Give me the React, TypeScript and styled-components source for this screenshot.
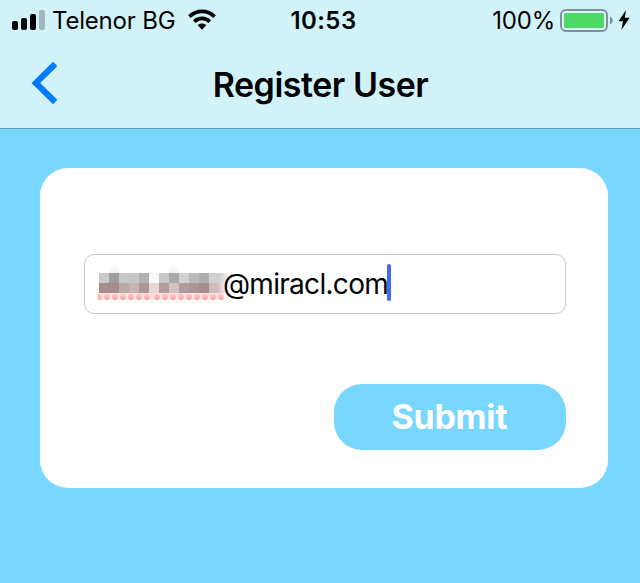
import React from 'react';
import styled, { createGlobalStyle } from 'styled-components';

const GlobalStyle = createGlobalStyle`
  * { box-sizing: border-box; }
  html, body { margin: 0; padding: 0; background: #78d6ff; }
  body { font-family: Inter, "Liberation Sans", sans-serif; color: #030303; overflow: hidden; }
`;

const Screen = styled.div`
  width: 640px;
  height: 583px;
  background: #78d6ff;
`;

const Header = styled.header`
  height: 129px;
  background: #d2f2f9;
  border-bottom: 1px solid #5c9fb9;
`;

const StatusBar = styled.div`
  height: 40px;
  display: grid;
  grid-template-columns: 240px 1fr 240px;
  align-items: center;
`;

const StatusGroup = styled.div<{ $end?: boolean }>`
  display: flex;
  align-items: center;
  height: 40px;
  justify-content: ${(p) => (p.$end ? 'flex-end' : 'flex-start')};
  padding: ${(p) => (p.$end ? '0 10px 0 0' : '0 0 0 11px')};
`;

const StatusText = styled.span<{ $spacing: number; $left?: number }>`
  font-size: 24px;
  height: 40px;
  line-height: 42px;
  letter-spacing: ${(p) => p.$spacing}px;
  margin-left: ${(p) => p.$left ?? 0}px;
  white-space: nowrap;
`;

const Clock = styled.time`
  font-size: 24px;
  height: 40px;
  line-height: 42px;
  font-weight: 600;
  letter-spacing: 0.45px;
  text-align: center;
  padding-left: 7px;
`;

const Glyph = styled.svg<{ $left?: number }>`
  display: block;
  flex: none;
  margin-left: ${(p) => p.$left ?? 0}px;
`;

const NavBar = styled.nav`
  height: 88px;
  display: grid;
  grid-template-columns: 80px 1fr 80px;
  align-items: center;
`;

const BackButton = styled.button`
  width: 60px;
  height: 86px;
  padding: 0 0 0 30px;
  border: 0;
  background: none;
  align-self: start;
`;

const Title = styled.h1`
  margin: 0;
  padding-left: 1px;
  font-size: 34px;
  height: 88px;
  line-height: 90px;
  font-weight: 600;
  letter-spacing: -0.48px;
  text-align: center;
  white-space: nowrap;
`;

const Card = styled.form`
  width: 568px;
  height: 320px;
  margin: 39px 0 0 40px;
  padding: 86px 42px 38px 44px;
  border-radius: 28px;
  background: #fff;
  display: flex;
  flex-direction: column;
  justify-content: space-between;
  align-items: flex-end;
`;

const Field = styled.div`
  width: 482px;
  height: 60px;
  padding-left: 5px;
  display: flex;
  align-items: center;
  border: 1px solid #c9c9c9;
  border-radius: 10px;
`;

const Domain = styled.span`
  font-size: 28px;
  line-height: 58px;
  letter-spacing: -0.7px;
  margin-left: -9px;
  white-space: nowrap;
`;

const Caret = styled.span`
  width: 4px;
  height: 37px;
  margin: -3px 0 0 -1px;
  border-radius: 2px;
  background: #466bea;
`;

const Submit = styled.button`
  width: 232px;
  height: 66px;
  padding: 0 1px 0 0;
  border: 0;
  border-radius: 28px;
  background: #78d6ff;
  color: #fff;
  font: 700 34px/66px Inter, "Liberation Sans", sans-serif;
  letter-spacing: -0.3px;
  text-align: center;
`;

const topTones = ['c9c9c9', '9d9d9d', 'c8c8c8', 'c6c6c6', 'b2b2b2', 'f8f8f8', 'c8c8c8', 'a9a9a9', 'd1d1d1', 'bababa', 'aeaeae', 'd0d0d0'];
const bottomTones = ['a48d8c', 'a58c8b', 'baaaa9', 'c8b4b3', 'ab9695', 'e5d8d7', 'b39d9d', 'd2c1c2', 'ae9d9d', 'a99595', 'a68d8c', 'cfbcbc'];
const dots = [9, 17, 25, 33, 41, 49, 57, 67, 75, 83, 91, 99, 107, 115, 123, 131];

const MaskedName = () => (
  <Glyph width="142" height="58" viewBox="0 0 142 58">
    <defs>
      <linearGradient id="ascender" x1="0" y1="0" x2="0" y2="1">
        <stop offset="0" stopColor="#fff" />
        <stop offset="1" stopColor="#f3f3f3" />
      </linearGradient>
      <linearGradient id="dot" x1="0" y1="0" x2="0" y2="1">
        <stop offset="0" stopColor="#ffc7c4" />
        <stop offset="1" stopColor="#fda3a0" />
      </linearGradient>
      <linearGradient id="edgeTop">
        <stop offset="0" stopColor="#d0d0d0" />
        <stop offset="1" stopColor="#d0d0d0" stopOpacity="0.3" />
      </linearGradient>
      <linearGradient id="edgeBottom">
        <stop offset="0" stopColor="#d5c0c0" />
        <stop offset="1" stopColor="#e6d6d6" stopOpacity="0.3" />
      </linearGradient>
      <filter id="halo" x="-10%" y="-60%" width="120%" height="220%">
        <feGaussianBlur stdDeviation="2.2" />
      </filter>
      <clipPath id="underline">
        <rect x="8" y="36" width="130" height="12" />
      </clipPath>
    </defs>
    <rect x="8" y="35" width="126" height="9" fill="#ffdedc" filter="url(#halo)" />
    <rect x="19" y="9" width="10" height="9" fill="url(#ascender)" />
    <rect x="79" y="9" width="10" height="9" fill="url(#ascender)" />
    <g shapeRendering="crispEdges">
      {topTones.map((tone, i) => (
        <rect key={i} x={9 + i * 10} y="18" width="10" height="10" fill={`#${tone}`} />
      ))}
      {bottomTones.map((tone, i) => (
        <rect key={i} x={9 + i * 10} y="28" width="10" height="10" fill={`#${tone}`} />
      ))}
    </g>
    <rect x="129" y="18" width="9" height="10" fill="url(#edgeTop)" />
    <rect x="129" y="28" width="6" height="10" fill="url(#edgeBottom)" />
    <g clipPath="url(#underline)">
      {dots.map((x) => (
        <circle key={x} cx={x} cy="42" r="2.9" fill="url(#dot)" />
      ))}
    </g>
  </Glyph>
);

const SignalIcon = () => (
  <Glyph width="35" height="22" viewBox="0 0 35 22">
    <rect x="1" y="12" width="6" height="9" rx="2" />
    <rect x="10" y="9" width="6" height="12" rx="2" />
    <rect x="19" y="5" width="6" height="16" rx="2" />
    <rect x="28" y="1" width="6" height="20" rx="2" fill="#9fb7bd" />
  </Glyph>
);

const WifiIcon = () => (
  <Glyph $left={12} width="30" height="22" viewBox="0 0 30 22">
    <path d="M2.4 7.6 C9.4 0.6 20.6 0.6 27.6 7.6" fill="none" stroke="#000" strokeWidth="3.7" />
    <path d="M7.3 12.6 C11.6 8.3 18.4 8.3 22.7 12.6" fill="none" stroke="#000" strokeWidth="3.7" />
    <path d="M10.6 16.1 C13.1 13.8 16.9 13.8 19.4 16.1 L15 20.8 Z" />
  </Glyph>
);

const BatteryIcon = () => (
  <Glyph $left={5} width="54" height="24" viewBox="0 0 54 24">
    <rect x="1" y="2" width="46" height="21" rx="5" fill="#d9f6fb" stroke="#7e9297" strokeWidth="2" />
    <rect x="4" y="5" width="40" height="15" rx="1.5" fill="#4cd964" />
    <path d="M50 8.5 C53.6 10 53.6 15 50 16.5 Z" fill="#7e9297" />
  </Glyph>
);

const BoltIcon = () => (
  <Glyph $left={4} width="12" height="20" viewBox="0 0 12 20">
    <path d="M8 0 L0.5 11.3 L5 11.3 L3.4 20 L11.6 7.8 L6.8 7.8 Z" />
  </Glyph>
);

export default function App() {
  return (
    <Screen>
      <GlobalStyle />
      <Header>
        <StatusBar>
          <StatusGroup>
            <SignalIcon />
            <StatusText $spacing={-0.2} $left={6}>Telenor BG</StatusText>
            <WifiIcon />
          </StatusGroup>
          <Clock>10:53</Clock>
          <StatusGroup $end>
            <StatusText $spacing={-0.2}>100%</StatusText>
            <BatteryIcon />
            <BoltIcon />
          </StatusGroup>
        </StatusBar>
        <NavBar>
          <BackButton type="button" aria-label="Back">
            <Glyph width="28" height="44" viewBox="0 0 28 44">
              <path d="M25.2 3 L5.8 22 L25.2 41" fill="none" stroke="#007aff" strokeWidth="6" />
            </Glyph>
          </BackButton>
          <Title>Register User</Title>
        </NavBar>
      </Header>
      <Card>
        <Field>
          <MaskedName />
          <Domain>@miracl.com</Domain>
          <Caret />
        </Field>
        <Submit type="button">Submit</Submit>
      </Card>
    </Screen>
  );
}
